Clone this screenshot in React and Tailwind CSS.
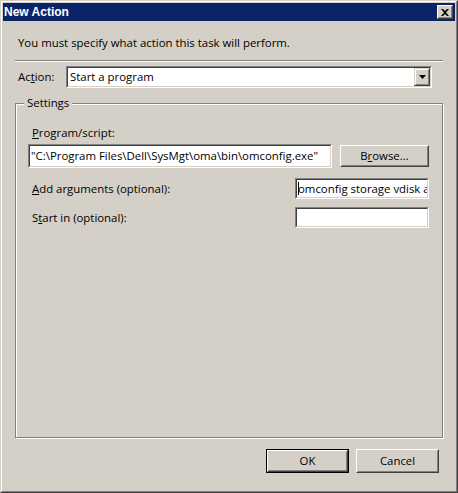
import React from "react";

const face = "bg-[#d4d0c8]";

function Sunken({ className = "", children }) {
  return (
    <div className={`border border-t-[#808080] border-l-[#808080] border-b-white border-r-white ${className}`}>
      <div className="w-full h-full border border-t-[#404040] border-l-[#404040] border-b-[#d4d0c8] border-r-[#d4d0c8] bg-white overflow-hidden flex items-center">
        {children}
      </div>
    </div>
  );
}

function Button({ className = "", children, isDefault = false }) {
  const inner = (
    <div className="w-full h-full border border-t-white border-l-white border-b-[#404040] border-r-[#404040]">
      <div className="w-full h-full border border-t-[#d4d0c8] border-l-[#d4d0c8] border-b-[#808080] border-r-[#808080] flex items-center justify-center text-black">
        {children}
      </div>
    </div>
  );
  if (isDefault) {
    return <div className={`border border-black ${className}`}>{inner}</div>;
  }
  return <div className={className}>{inner}</div>;
}

export default function App() {
  return (
    <div className="w-[458px] h-[493px] font-['Open_Sans',sans-serif] text-[11.4px] text-black">
      <div className="w-full h-full border border-t-[#d4d0c8] border-l-[#d4d0c8] border-b-[#404040] border-r-[#404040]">
        <div className={`w-full h-full border border-t-white border-l-white border-b-[#808080] border-r-[#808080] p-px ${face} flex flex-col`}>
          {/* Title bar */}
          <div className="h-[18px] bg-[#0a246a] flex items-center justify-between pl-[1px] pr-[2px]">
            <span className="text-white font-bold text-[12px] font-['Liberation_Sans',sans-serif] leading-none">New Action</span>
            <div className="w-[16px] h-[14px] border border-t-white border-l-white border-b-[#404040] border-r-[#404040]">
              <div className="w-full h-full bg-[#d4d0c8] border border-t-[#d4d0c8] border-l-[#d4d0c8] border-b-[#808080] border-r-[#808080] flex items-center justify-center">
                <svg width="8" height="7" viewBox="0 0 8 7">
                  <path d="M0 0h2l2 2 2-2h2L5 3.5 8 7H6L4 5 2 7H0l3-3.5z" fill="#000" />
                </svg>
              </div>
            </div>
          </div>

          {/* Instruction */}
          <div className="mt-[14px] pl-[15px] h-[16px] leading-[16px]">You must specify what action this task will perform.</div>

          {/* Separator */}
          <div className="mt-[9px] ml-[12px] w-[428px] border-t border-t-[#808080] border-b border-b-white" />

          {/* Action row */}
          <div className="mt-[4px] flex items-center h-[22px]">
            <span className="ml-[15px] w-[48px]">
              Ac<span className="underline">t</span>ion:
            </span>
            <Sunken className="w-[366px] h-[22px]">
              <span className="pl-[2px] flex-1">Start a program</span>
              <div className="w-[16px] h-[18px] border border-t-[#d4d0c8] border-l-[#d4d0c8] border-b-[#404040] border-r-[#404040]">
                <div className="w-full h-full bg-[#d4d0c8] border border-t-white border-l-white border-b-[#808080] border-r-[#808080] flex items-center justify-center">
                  <svg width="7" height="4" viewBox="0 0 7 4">
                    <path d="M0 0h7L3.5 4z" fill="#000" />
                  </svg>
                </div>
              </div>
            </Sunken>
          </div>

          {/* Settings group */}
          <div className="relative mt-[15px] ml-[12px] w-[428px] h-[335px] border border-[#808080] shadow-[inset_1px_1px_0_#fff,1px_1px_0_#fff]">
            <span className={`absolute left-[8px] top-[-9px] px-[3px] leading-[16px] ${face}`}>Settings</span>

            <div className="flex flex-col pl-[15px] pt-[21px]">
              <div className="h-[16px] leading-[16px] pl-[1px]">
                <span className="underline">P</span>rogram/script:
              </div>
              <div className="mt-[3px] flex items-center h-[24px]">
                <Sunken className="w-[304px] h-[24px] -ml-[3px]">
                  <span className="pl-[1px] whitespace-nowrap">"C:\Program Files\Dell\SysMgt\oma\bin\omconfig.exe"</span>
                </Sunken>
                <Button className="ml-[8px] w-[89px] h-[22px]">
                  B<span className="underline">r</span>owse...
                </Button>
              </div>

              <div className="mt-[10px] flex items-center h-[21px]">
                <span className="w-[264px] pl-[1px]">
                  <span className="underline">A</span>dd arguments (optional):
                </span>
                <Sunken className="w-[134px] h-[21px]">
                  <span className="shrink-0 w-px h-[13px] bg-black ml-[1px]" />
                  <span className="whitespace-nowrap -ml-[1px]">omconfig storage vdisk action=</span>
                </Sunken>
              </div>

              <div className="mt-[8px] flex items-center h-[21px]">
                <span className="w-[264px] pl-[1px]">
                  S<span className="underline">t</span>art in (optional):
                </span>
                <Sunken className="w-[134px] h-[21px]" />
              </div>
            </div>
          </div>

          {/* Buttons */}
          <div className="mt-[11px] flex justify-end pr-[16px] gap-[7px]">
            <Button isDefault className="w-[83px] h-[24px]">OK</Button>
            <Button className="w-[83px] h-[24px]">Cancel</Button>
          </div>
        </div>
      </div>
    </div>
  );
}
